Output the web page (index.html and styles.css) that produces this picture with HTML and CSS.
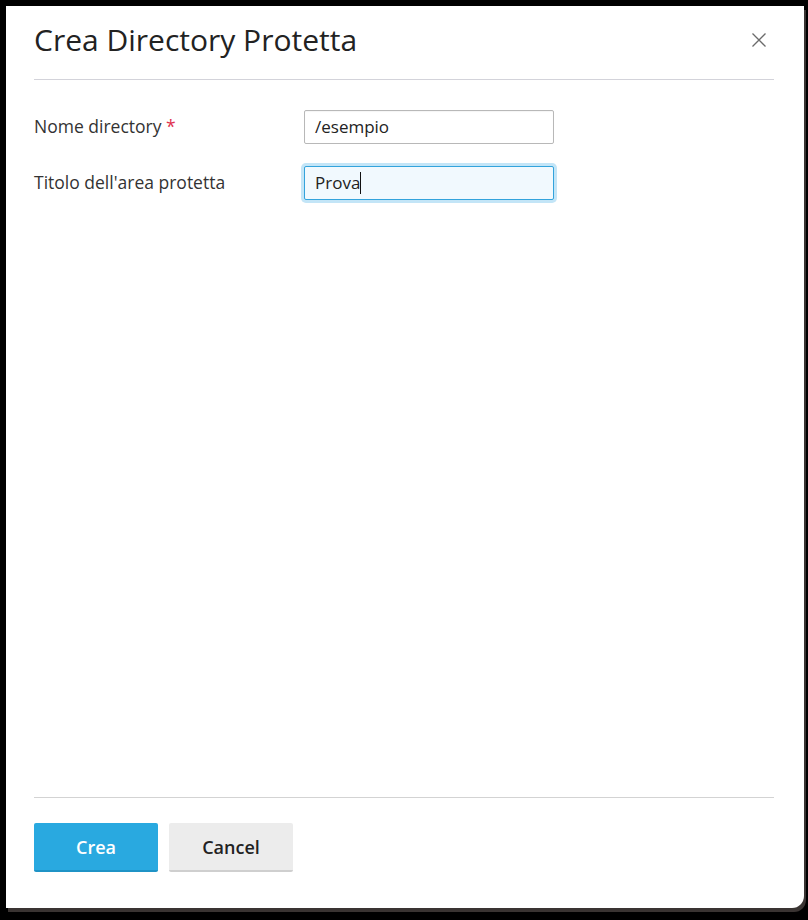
FILE: index.html
```html
<!DOCTYPE html>
<html lang="it">
<head>
<meta charset="utf-8">
<title>Crea Directory Protetta</title>
<link rel="stylesheet" href="styles.css">
</head>
<body>
<div class="dialog">
  <div class="header">
    <h1 class="title">Crea Directory Protetta</h1>
    <button class="close" aria-label="Chiudi">
      <svg width="16" height="16" viewBox="0 0 16 16"><path d="M1.5 1.5 L14.5 14.5 M14.5 1.5 L1.5 14.5" stroke="#6b6b6b" stroke-width="1.3" fill="none"/></svg>
    </button>
  </div>
  <div class="body">
    <div class="row">
      <div class="label">Nome directory <span class="req">*</span></div>
      <div class="field">/esempio</div>
    </div>
    <div class="row">
      <div class="label">Titolo dell'area protetta</div>
      <div class="field focused">Prova<span class="caret"></span></div>
    </div>
  </div>
  <div class="footer">
    <button class="btn primary">Crea</button>
    <button class="btn secondary">Cancel</button>
  </div>
</div>
</body>
</html>
```
FILE: styles.css
```css
html, body {
  margin: 0;
  padding: 0;
  background: #000;
  width: 808px;
  height: 920px;
  overflow: hidden;
}
body {
  font-family: "Open Sans", "Noto Sans", sans-serif;
  color: #222;
}
.dialog {
  margin: 6px 0 0 6px;
  width: 798px;
  height: 902px;
  background: #fff;
  border-bottom-right-radius: 12px;
  box-shadow: 2px 4px 0 #3a3432;
  display: flex;
  flex-direction: column;
  box-sizing: border-box;
}
.header {
  margin: 0 30px 0 28px;
  padding: 14px 0 19px;
  border-bottom: 1px solid #d3d3da;
  display: flex;
  align-items: center;
  justify-content: space-between;
}
.title {
  margin: 0;
  font-size: 30px;
  font-weight: 400;
  line-height: 40px;
  color: #222;
}
.close {
  border: 0;
  background: none;
  padding: 0;
  width: 16px;
  height: 16px;
  margin-right: 7px;
  margin-top: 0;
  display: flex;
}
.body {
  flex: 1;
  padding: 30px 30px 0 28px;
  display: flex;
  flex-direction: column;
  gap: 22px;
}
.row {
  display: flex;
  align-items: center;
}
.label {
  width: 270px;
  font-size: 17.5px;
  color: #333;
  margin-top: -2px;
}
.req {
  color: #e0324e;
}
.field {
  width: 250px;
  height: 34px;
  box-sizing: border-box;
  border: 1px solid #b8b8b8;
  border-radius: 2px;
  padding: 0 10px;
  font-size: 17px;
  line-height: 32px;
  color: #222;
  display: flex;
  align-items: center;
  box-shadow: inset 0 1px 1px rgba(0,0,0,0.04);
}
.field.focused {
  border-color: #33a3dc;
  background: #f1f9fe;
  box-shadow: 0 0 0 3px #c3e5f7;
}
.caret {
  display: inline-block;
  width: 1px;
  height: 22px;
  background: #111;
}
.footer {
  margin: 0 30px 0 28px;
  border-top: 1px solid #d3d3d3;
  padding: 25px 0 36px;
  display: flex;
  gap: 11px;
}
.btn {
  width: 124px;
  height: 49px;
  border: 0;
  border-radius: 2px;
  font-family: "Open Sans", "Noto Sans", sans-serif;
  font-size: 18px;
  font-weight: 600;
  padding: 0;
}
.primary {
  background: #29a9e0;
  color: #fff;
  border-bottom: 2px solid #1f93c6;
}
.secondary {
  background: #ececec;
  color: #222;
  border-bottom: 2px solid #cfcfcf;
}
```
